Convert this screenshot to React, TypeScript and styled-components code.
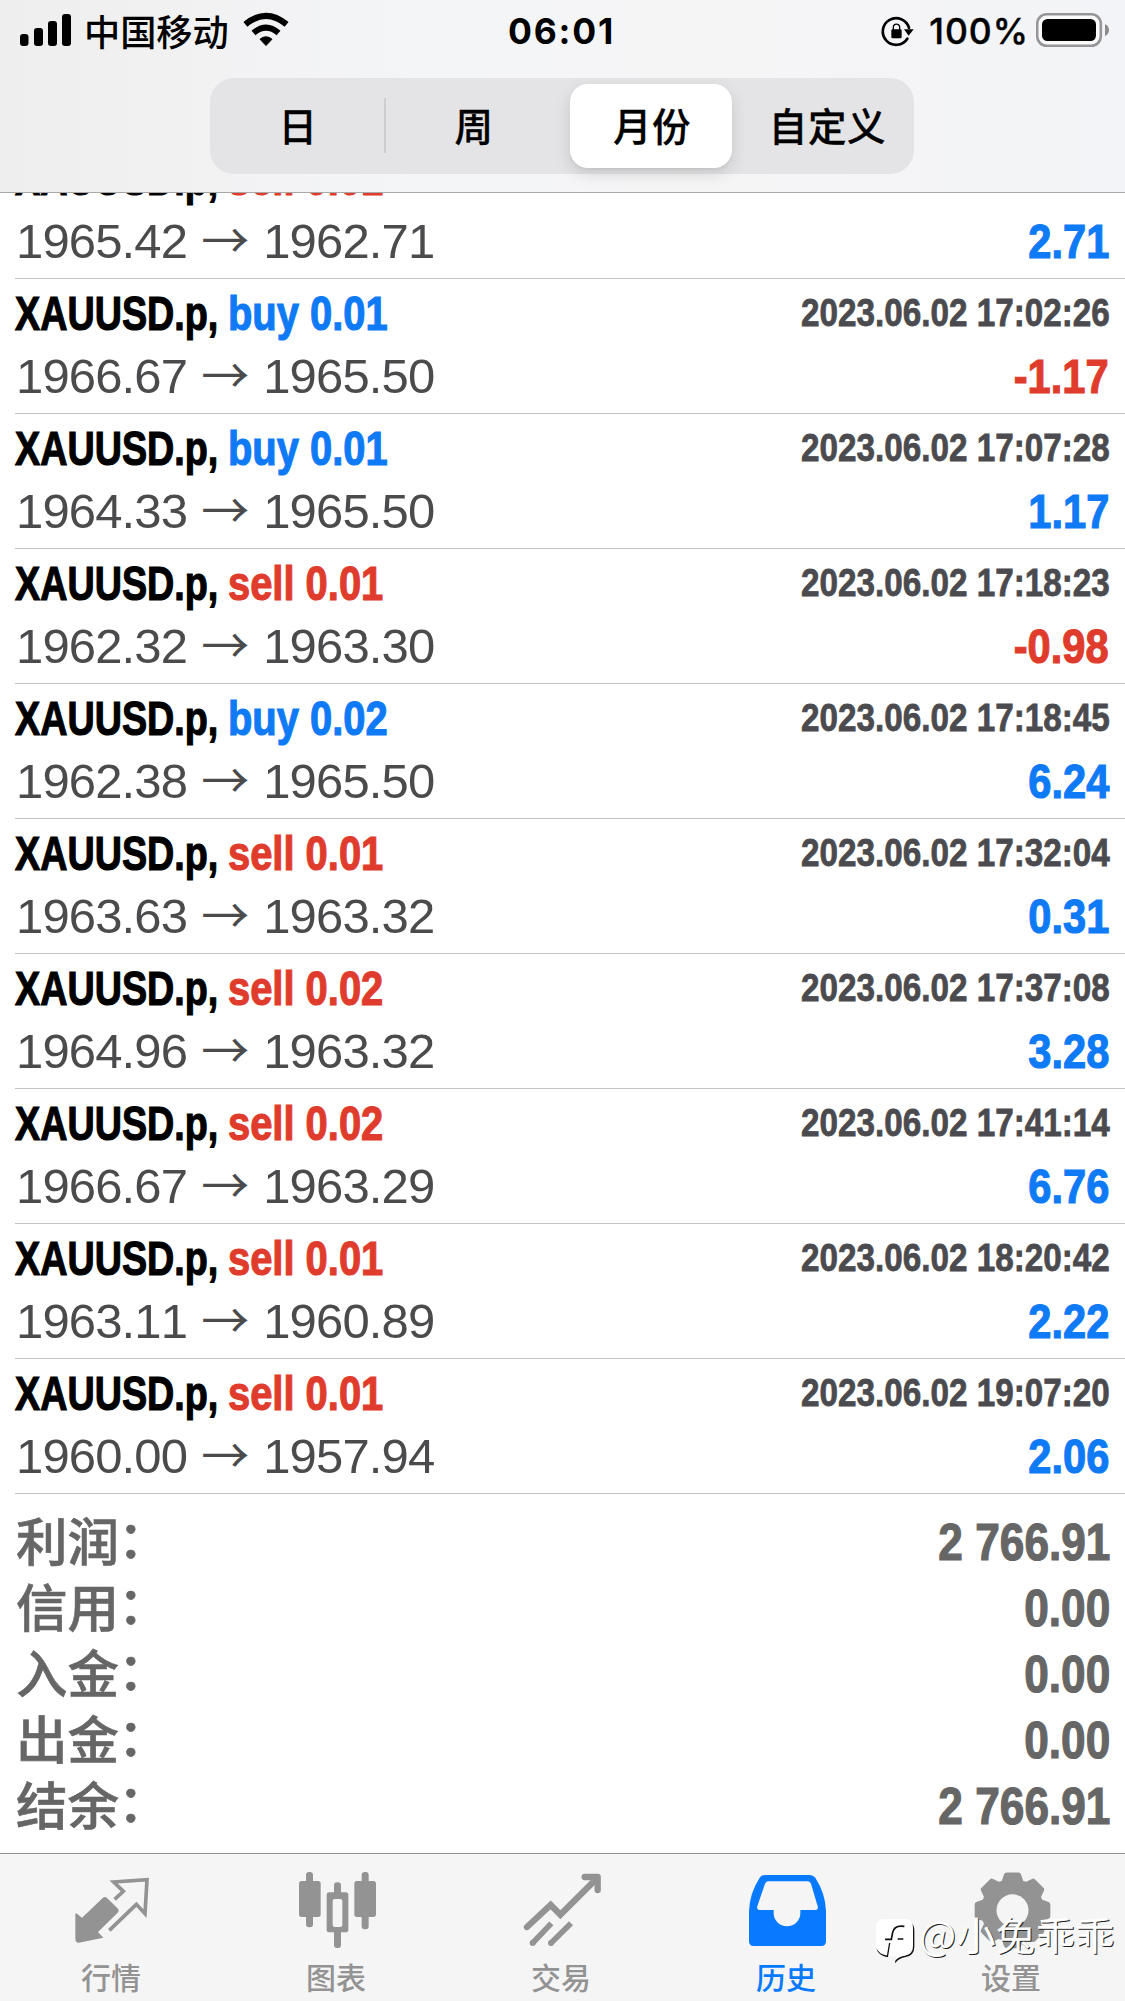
import React from 'react';
import styled, { createGlobalStyle } from 'styled-components';

const BLUE = '#0f7af5';
const RED = '#e03c2d';

const GlobalStyle = createGlobalStyle`
  * { box-sizing: border-box; }
  body {
    margin: 0;
    background: #fff;
    font-family: "Liberation Sans", "Noto Sans CJK SC", sans-serif;
  }
`;

const Screen = styled.div`
  width: 1125px;
  height: 2001px;
  display: flex;
  flex-direction: column;
  overflow: hidden;
  background: #fff;
`;

const Header = styled.header`
  flex: none;
  height: 193px;
  border-bottom: 1px solid #a9a9aa;
  background: linear-gradient(90deg, #eeeeee 0, #f1f1f2 160px, #f4f5f7 420px, #f5f5f6 700px, #f3f4f7 1125px);
`;

const StatusBar = styled.div`
  height: 62px;
  display: grid;
  grid-template-columns: 1fr auto 1fr;
  align-items: center;
  padding: 0 16px 0 20px;
`;

const StatusSide = styled.div<{ $end?: boolean }>`
  display: flex;
  align-items: center;
  height: 62px;
  justify-content: ${p => (p.$end ? 'flex-end' : 'flex-start')};
`;

const Carrier = styled.span`
  margin: 0 14px 2px 12px;
  font: 500 36.2px/58px "Noto Sans CJK SC", sans-serif;
`;

const Clock = styled.span`
  padding: 2px 6px 0 0;
  font: 700 35.5px/60px Inter, sans-serif;
  letter-spacing: 1.8px;
`;

const Percent = styled.span`
  margin: 2px 7px 0 15px;
  font: 500 35.5px/60px Inter, sans-serif;
  letter-spacing: 1px;
  -webkit-text-stroke: 0.4px #000;
`;

const Segments = styled.div`
  width: 704px;
  height: 96px;
  margin: 16px auto 0 210px;
  display: grid;
  grid-template-columns: repeat(4, 176px);
  border-radius: 24px;
  background: #e4e4e6;
`;

const Segment = styled.button<{ $active?: boolean; $divider?: boolean; $nudge?: number }>`
  border: 0;
  padding: 0 0 5px ${p => p.$nudge ?? 0}px;
  margin: ${p => (p.$active ? '6px 6px 6px 8px' : '0')};
  border-radius: 18px;
  background: ${p => (p.$active
    ? '#fff'
    : p.$divider
      ? 'linear-gradient(#cdcdd0, #cdcdd0) right 20px / 2px 55px no-repeat'
      : 'transparent')};
  box-shadow: ${p => (p.$active ? '0 6px 16px rgba(0,0,0,.13), 0 2px 2px rgba(0,0,0,.04)' : 'none')};
  color: #000;
  font: 500 38.5px/76px "Noto Sans CJK SC", sans-serif;
  letter-spacing: 0.6px;
  -webkit-text-stroke: 0.3px #000;
`;

const History = styled.main`
  flex: 1;
  min-height: 0;
  overflow: hidden;
`;

const Trades = styled.div`
  margin-top: -49px;
  padding-left: 15px;
`;

const Trade = styled.div`
  height: 135px;
  padding: 6px 16px 0 0;
  border-bottom: 1px solid #c3c3c5;
`;

const Line = styled.div<{ $height: number }>`
  height: ${p => p.$height}px;
  display: flex;
  align-items: center;
  white-space: nowrap;
`;

const Condensed = styled.span<{ $scale: number; $color: string; $size?: number; $width?: number; $right?: boolean; $weight?: number }>`
  flex: none;
  ${p => (p.$width ? `width: ${p.$width}px;` : '')}
  ${p => (p.$right ? 'margin-left: auto;' : '')}
  color: ${p => p.$color};
  font-weight: 700;
  font-size: ${p => p.$size ?? 49}px;
  line-height: 56px;
  font-kerning: none;
  transform: scaleX(${p => p.$scale});
  transform-origin: ${p => (p.$right ? 'right' : 'left')} center;
  -webkit-text-stroke: ${p => p.$weight ?? 1.2}px ${p => p.$color};
`;

const DealTime = styled(Condensed)`
  margin-right: -1px;
  padding-bottom: 2px;
`;

const Profit = styled(Condensed)`
  padding-top: 1px;
`;

const Price = styled.span`
  padding-left: 1px;
  color: #4b4b4d;
  font-size: 49px;
  line-height: 60px;
  letter-spacing: -0.85px;
  font-kerning: none;
`;

const Arrow = styled.span`
  display: inline-block;
  width: 48px;
  margin: 0 14px 0 14px;
  font: 400 48px/56px "Noto Sans CJK SC", sans-serif;
  letter-spacing: 0;
`;

const Summary = styled.div`
  padding: 15px 15px 0 15px;
`;

const SummaryRow = styled.div`
  height: 66px;
  display: flex;
  align-items: center;
`;

const SummaryLabel = styled.span`
  padding: 0 0 7px 1px;
  color: #666;
  font: 500 51.5px/58px "Noto Sans CJK SC", sans-serif;
  -webkit-text-stroke: 0.6px #666;
`;

const Colon = styled.span`
  display: inline-block;
  transform: translate(-1px, -3px);
`;

const TabBar = styled.nav`
  flex: none;
  position: relative;
  height: 148px;
  display: grid;
  grid-template-columns: repeat(5, 225px);
  border-top: 1px solid #8f8f90;
  background: #f5f5f5;
`;

const Tab = styled.div<{ $active?: boolean }>`
  display: flex;
  flex-direction: column;
  align-items: center;
  padding-top: 17px;
  color: ${p => (p.$active ? '#087aff' : '#939393')};
`;

const TabLabel = styled.span`
  margin-top: 5px;
  padding-right: 3px;
  font: 500 30px/40px "Noto Sans CJK SC", sans-serif;
`;

const Watermark = styled.div`
  position: absolute;
  left: 873px;
  top: 61px;
  display: flex;
  align-items: flex-start;
  color: #fff;
  white-space: nowrap;
`;

const Handle = styled.span`
  margin-top: -6px;
  font: 400 39.2px/48px "Noto Sans CJK SC", sans-serif;
  letter-spacing: 0.4px;
  text-shadow: 1px 1px 0.5px #222;
`;

const Signal = () => (
  <svg width="52" height="62" viewBox="0 0 52 62">
    <rect x="0" y="34" width="8.5" height="12" rx="3" />
    <rect x="14" y="28" width="9" height="18" rx="3" />
    <rect x="28" y="21" width="9" height="25" rx="3" />
    <rect x="42" y="14" width="9" height="32" rx="3" />
  </svg>
);

const Wifi = () => (
  <svg width="46" height="62" viewBox="243 0 46 62">
    <path d="M266 45.5 L260 39.2 Q266 34.4 272 39.2 Z" strokeWidth="1" stroke="#000" strokeLinejoin="round" />
    <path d="M253.5 33 Q266 22.4 278.5 33" fill="none" stroke="#000" strokeWidth="6" />
    <path d="M245.4 24.4 Q266 7.4 286.6 24.4" fill="none" stroke="#000" strokeWidth="6.2" />
  </svg>
);

const RotationLock = () => (
  <svg width="34" height="62" viewBox="402 0 102 186">
    <path d="M484 116 A40 40 0 1 1 489 84" fill="none" stroke="#000" strokeWidth="8" strokeLinecap="round" />
    <path d="M474 88 H503 L488 107 Z" />
    <rect x="436" y="88" width="31" height="27" rx="4" />
    <path d="M442 90 V82 a9.5 9.5 0 0 1 19 0 V90" fill="none" stroke="#000" strokeWidth="4" />
  </svg>
);

const Battery = () => (
  <svg width="73" height="62" viewBox="0 0 73 62">
    <rect x="1.2" y="14.2" width="63.6" height="31.6" rx="9.5" fill="#fafafa" stroke="#969698" strokeWidth="2.6" />
    <rect x="6" y="19" width="54" height="22" rx="5.5" />
    <path d="M69 24 Q73 26 73 30 T69 36 Z" fill="#8b8b8d" />
  </svg>
);

const QuotesIcon = () => (
  <svg width="81" height="80" viewBox="216 93 243 240" fill="currentColor">
    <path d="M229 220 L246 233 L309 173 Q315 168 321 174 L354 206 Q359 212 353 218 L294 276 L310 293 L237 308 Q226 308 226 297 V222 Z" />
    <path d="M344 178 L370 154 L341 126 L441 119 L435 221 L409 193 L328 271" fill="none" stroke="currentColor" strokeWidth="11" />
  </svg>
);

const ChartIcon = () => (
  <svg width="81" height="80" viewBox="891 93 243 240" fill="currentColor">
    <rect x="918" y="96" width="21" height="166" rx="9" />
    <rect x="897" y="123" width="65" height="108" rx="8" />
    <rect x="1085" y="96" width="21" height="172" rx="9" />
    <rect x="1063" y="123" width="65" height="108" rx="8" />
    <rect x="1002" y="127" width="21" height="197" rx="9" />
    <rect x="980" y="157" width="65" height="120" rx="8" />
    <rect x="998" y="177" width="29" height="84" rx="6" fill="#f5f5f5" />
  </svg>
);

const TradeIcon = () => (
  <svg width="81" height="80" viewBox="126 93 243 240" fill="none" stroke="currentColor" strokeWidth="19">
    <path d="M141 261 L212 195 L241 224 L345 121" strokeLinecap="round" />
    <path d="M314 111 H353 V150" strokeLinecap="round" strokeLinejoin="round" />
    <path d="M337 111 H353 V128 Z" strokeWidth="10" />
    <path d="M214 250 L158 309 M273 250 L213 309" strokeWidth="17" />
    <circle cx="158" cy="309" r="4" strokeWidth="10" />
    <circle cx="213" cy="309" r="4" strokeWidth="10" />
  </svg>
);

const HistoryIcon = () => (
  <svg width="81" height="80" viewBox="801 93 243 240" fill="currentColor" fillRule="evenodd">
    <path d="M856 105 H989 Q1000 105 1006 113 Q1036 160 1038 212 V304 Q1038 318 1024 318 H821 Q807 318 807 304 V212 Q809 160 839 113 Q845 105 856 105 Z M866 124 Q858 124 855 131 L832 199 Q829 210 839 210 H881 V220 A40 39 0 0 0 961 220 V210 H1006 Q1016 210 1013 199 L993 131 Q990 124 982 124 Z" />
  </svg>
);

const gearPoints = Array.from({ length: 8 }, (_, i) =>
  [[-17, 87], [-9.5, 107], [9.5, 107], [17, 87]].map(([offset, radius]) => {
    const a = ((i * 45 + offset - 90) * Math.PI) / 180;
    return `${(502.5 + radius * Math.cos(a)).toFixed(1)},${(211 + radius * Math.sin(a)).toFixed(1)}`;
  }).join(' '),
).join(' ');

const SettingsIcon = () => (
  <svg width="81" height="80" viewBox="381 93 243 240">
    <polygon points={gearPoints} fill="currentColor" stroke="currentColor" strokeWidth="16" strokeLinejoin="round" />
    <circle cx="502.5" cy="211" r="48" fill="#f5f5f5" />
  </svg>
);

const WatermarkLogo = () => (
  <svg width="46" height="54" viewBox="84 225 138 162" fill="none">
    <path d="M196 246 Q208 254 208 272 V320 Q208 346 182 351 Q163 353 150 370 L152 352 L160 340 Z" fill="#111" />
    <path d="M95 328 Q100 346 127 352 L129 340 Z" fill="#111" />
    <path d="M118 237 H179 Q204 237 204 263 V319 Q204 343 180 347 Q163 349 150 362 L151 347 H128 Q98 343 93 318 V263 Q93 237 118 237 Z" fill="#fff" />
    <path d="M178 259 Q148 254 143 277 L139 298 H120 M158 297 H175" stroke="#111" strokeWidth="5" />
    <path d="M134 309 L127 351" stroke="#111" strokeWidth="4" />
  </svg>
);

type Deal = { side: 'buy' | 'sell'; lots: string; open: string; close: string; time: string; profit: string };

const deals: Deal[] = [
  { side: 'sell', lots: '0.01', open: '1965.42', close: '1962.71', time: '', profit: '2.71' },
  { side: 'buy', lots: '0.01', open: '1966.67', close: '1965.50', time: '2023.06.02 17:02:26', profit: '-1.17' },
  { side: 'buy', lots: '0.01', open: '1964.33', close: '1965.50', time: '2023.06.02 17:07:28', profit: '1.17' },
  { side: 'sell', lots: '0.01', open: '1962.32', close: '1963.30', time: '2023.06.02 17:18:23', profit: '-0.98' },
  { side: 'buy', lots: '0.02', open: '1962.38', close: '1965.50', time: '2023.06.02 17:18:45', profit: '6.24' },
  { side: 'sell', lots: '0.01', open: '1963.63', close: '1963.32', time: '2023.06.02 17:32:04', profit: '0.31' },
  { side: 'sell', lots: '0.02', open: '1964.96', close: '1963.32', time: '2023.06.02 17:37:08', profit: '3.28' },
  { side: 'sell', lots: '0.02', open: '1966.67', close: '1963.29', time: '2023.06.02 17:41:14', profit: '6.76' },
  { side: 'sell', lots: '0.01', open: '1963.11', close: '1960.89', time: '2023.06.02 18:20:42', profit: '2.22' },
  { side: 'sell', lots: '0.01', open: '1960.00', close: '1957.94', time: '2023.06.02 19:07:20', profit: '2.06' },
];

const totals = [
  ['利润', '2 766.91'],
  ['信用', '0.00'],
  ['入金', '0.00'],
  ['出金', '0.00'],
  ['结余', '2 766.91'],
];

const tabs = [
  { label: '行情', Icon: QuotesIcon },
  { label: '图表', Icon: ChartIcon },
  { label: '交易', Icon: TradeIcon },
  { label: '历史', Icon: HistoryIcon, active: true },
  { label: '设置', Icon: SettingsIcon },
];

export default function App() {
  return (
    <Screen>
      <GlobalStyle />
      <Header>
        <StatusBar>
          <StatusSide>
            <Signal />
            <Carrier>中国移动</Carrier>
            <Wifi />
          </StatusSide>
          <Clock>06:01</Clock>
          <StatusSide $end>
            <RotationLock />
            <Percent>100%</Percent>
            <Battery />
          </StatusSide>
        </StatusBar>
        <Segments>
          <Segment $divider>日</Segment>
          <Segment>周</Segment>
          <Segment $active $nudge={2}>月份</Segment>
          <Segment $nudge={3}>自定义</Segment>
        </Segments>
      </Header>
      <History>
        <Trades>
          {deals.map((d, i) => (
            <Trade key={i}>
              <Line $height={56}>
                <Condensed $scale={0.77} $width={213} $color="#000">XAUUSD.p,</Condensed>
                <Condensed $scale={0.814} $color={d.side === 'buy' ? BLUE : RED}>{d.side} {d.lots}</Condensed>
                {d.time && <DealTime $right $scale={0.842} $size={39.5} $weight={0.8} $color="#4b4b4f">{d.time}</DealTime>}
              </Line>
              <Line $height={68}>
                <Price>{d.open}<Arrow>→</Arrow>{d.close}</Price>
                <Profit $right $scale={0.85} $color={d.profit.startsWith('-') ? RED : BLUE}>{d.profit}</Profit>
              </Line>
            </Trade>
          ))}
        </Trades>
        <Summary>
          {totals.map(([label, value]) => (
            <SummaryRow key={label}>
              <SummaryLabel>{label}<Colon>：</Colon></SummaryLabel>
              <Condensed $right $scale={0.85} $size={52} $color="#666">{value}</Condensed>
            </SummaryRow>
          ))}
        </Summary>
      </History>
      <TabBar>
        {tabs.map(({ label, Icon, active }) => (
          <Tab key={label} $active={active}>
            <Icon />
            <TabLabel>{label}</TabLabel>
          </Tab>
        ))}
        <Watermark>
          <WatermarkLogo />
          <Handle>@小兔乖乖</Handle>
        </Watermark>
      </TabBar>
    </Screen>
  );
}
